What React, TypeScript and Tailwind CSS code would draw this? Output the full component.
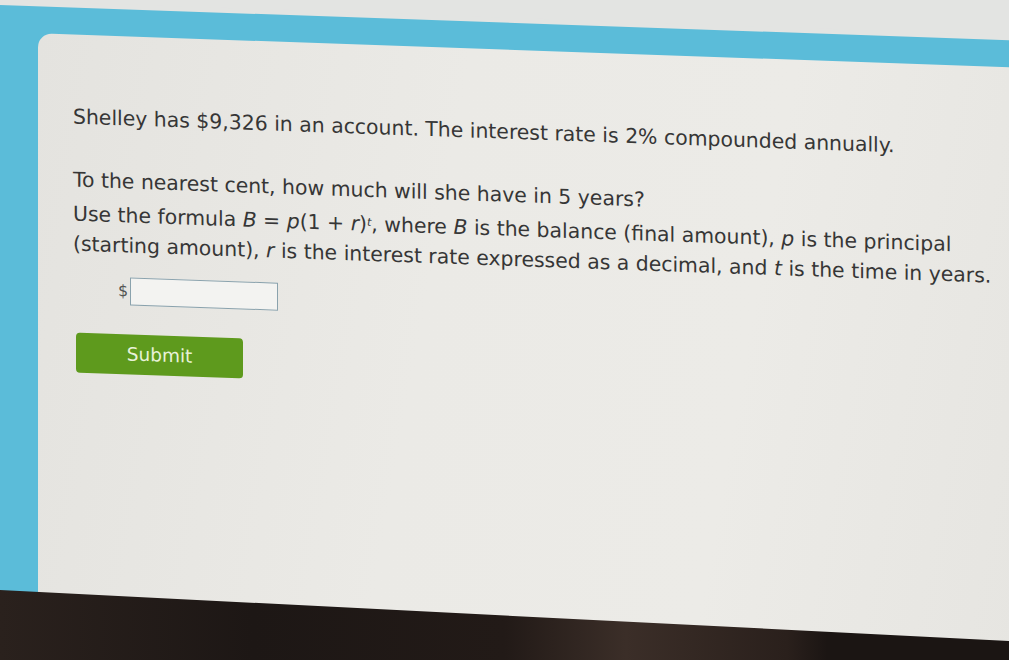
import React from "react";

export default function App() {
  return (
    <div className="w-[1009px] h-[660px] overflow-hidden relative bg-[#e3e4e2] font-['DejaVu_Sans',sans-serif]">
      <div className="origin-top-left [transform:skewY(2deg)] w-[1009px]">
        <div className="h-[5px] bg-[#e3e4e2]" />
        <div className="bg-[#5bbcd9] pt-[27px] pl-[38px]">
          <div className="h-[640px] rounded-tl-[14px] bg-[linear-gradient(100deg,#e4e3df_0%,#ebeae6_40%,#ecebe7_70%,#e6e5e1_100%)] pl-[35px] pt-[67px] text-[#363636] text-[20.4px]">
            <p className="leading-[30px]">Shelley has $9,326 in an account. The interest rate is 2% compounded annually.</p>
            <p className="leading-[30px] mt-[33px]">To the nearest cent, how much will she have in 5 years?</p>
            <p className="leading-[30px] mt-[4px]">
              Use the formula <i>B</i> = <i>p</i>(1 + <i>r</i>)
              <sup className="text-[11px] italic">t</sup>, where <i>B</i> is the balance (final amount), <i>p</i> is the principal
              <br />
              (starting amount), <i>r</i> is the interest rate expressed as a decimal, and <i>t</i> is the time in years.
            </p>
            <div className="mt-[16px] h-[30px] flex items-center pl-[45px]">
              <span className="text-[16px] text-[#555] mr-[2px]">$</span>
              <div className="w-[148px] h-[28px] border border-[#8aa2ad] bg-[#f3f3f1]" />
            </div>
            <button className="mt-[28px] ml-[3px] w-[167px] h-[40px] rounded-[4px] bg-[#5e9a1d] text-[#e8f2d8] text-[18.5px] flex items-center justify-center">
              Submit
            </button>
          </div>
        </div>
      </div>
      <div className="absolute inset-0 [clip-path:polygon(0_590px,1009px_641px,1009px_660px,0_660px)] bg-[linear-gradient(90deg,#2a211d_0%,#1d1715_25%,#221a17_50%,#3b2e28_62%,#2a201c_78%,#1b1513_82%,#1b1513_100%)]" />
    </div>
  );
}
